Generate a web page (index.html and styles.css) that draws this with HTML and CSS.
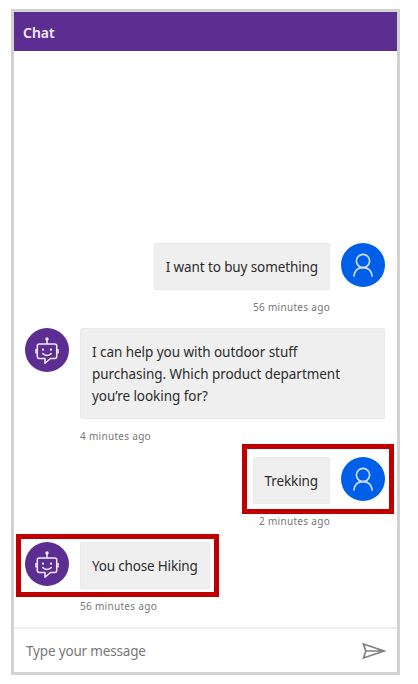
FILE: index.html
```html
<!DOCTYPE html>
<html lang="en">
<head>
<meta charset="utf-8">
<title>Chat</title>
<link rel="stylesheet" href="styles.css">
</head>
<body>
<svg class="defs" width="0" height="0" aria-hidden="true">
  <symbol id="bot" viewBox="0 0 44 44">
    <circle cx="22" cy="11" r="1.7" fill="#f3ecfa"/>
    <g fill="none" stroke="#f3ecfa" stroke-width="1.5" stroke-linejoin="round">
      <path d="M22 12v4M14.300 16h15.400a2 2 0 0 1 2 2v10.500a2 2 0 0 1-2 2h-4.200l-5.500 4.700V30.500h-5.700a2 2 0 0 1-2-2V18a2 2 0 0 1 2-2z"/>
      <path d="M17.700 25.500c2 2.500 6.600 2.500 8.600 0" stroke-linecap="round"/>
      <path d="M11 21v4.500M33 21v4.500" stroke-width="1.500"/>
    </g>
    <circle cx="18" cy="21.700" r="1.100" fill="#f3ecfa"/>
    <circle cx="26" cy="21.700" r="1.100" fill="#f3ecfa"/>
  </symbol>
  <symbol id="person" viewBox="0 0 44 44">
    <g fill="none" stroke="#d0e0ff" stroke-width="1.600">
      <circle cx="22" cy="18" r="6.600"/>
      <path d="M12.700 33.600C13.400 27.600 17 24.600 22 24.600s8.600 3 9.300 9"/>
    </g>
  </symbol>
</svg>
<main class="chat">
  <header class="header">Chat</header>
  <section class="log">
    <div class="message user">
      <div class="row"><p class="bubble">I want to buy something</p><svg class="avatar"><use href="#person"/></svg></div>
      <time class="time">56 minutes ago</time>
    </div>
    <div class="message bot long">
      <div class="row"><svg class="avatar"><use href="#bot"/></svg><p class="bubble">I can help you with outdoor stuff<br>purchasing. Which product department<br>you’re looking for?</p></div>
      <time class="time">4 minutes ago</time>
    </div>
    <div class="message user marked">
      <div class="row"><p class="bubble">Trekking</p><svg class="avatar"><use href="#person"/></svg></div>
      <time class="time">2 minutes ago</time>
    </div>
    <div class="message bot marked">
      <div class="row"><svg class="avatar"><use href="#bot"/></svg><p class="bubble">You chose Hiking</p></div>
      <time class="time">56 minutes ago</time>
    </div>
  </section>
  <footer class="composer">
    <span>Type your message</span>
    <svg class="send" width="24" height="18" viewBox="0 0 24 18"><path d="M1.500 2 22 9 1.500 16 3.800 9zM3.800 9H21" fill="none" stroke="#808080" stroke-width="1.700"/></svg>
  </footer>
</main>
</body>
</html>
```
FILE: styles.css
```css
*, *::after { box-sizing: border-box; }
body {
  margin: 0;
  padding: 9px 0 0 11px;
  background: #fff;
  font: 13.5px/22px "Noto Sans", sans-serif;
  letter-spacing: -0.11px;
  color: #2c2c2c;
}
.defs { position: absolute; }
.chat {
  display: flex;
  flex-direction: column;
  width: 388.500px;
  height: 666px;
  border: 3px solid #d2d2d2;
}
.header {
  height: 39px;
  padding: 0 9px;
  background: #5c2e91;
  color: #f3edf9;
  font-size: 14px;
  font-weight: 600;
  letter-spacing: 0;
  line-height: 42px;
}
.log {
  flex: 1;
  display: flex;
  flex-direction: column;
  padding: 192px 11.500px 0 11px;
}
.message { height: 85px; }
.long { height: 129px; }
.row { display: flex; gap: 11px; align-items: flex-start; }
.user .row { justify-content: flex-end; }
.avatar { width: 44px; height: 44px; flex: none; border-radius: 50%; background: #5c2e91; }
.user .avatar { background: #005fe9; }
.bubble {
  margin: 0;
  min-height: 47px;
  padding: 12px 11px 11px;
  border: 1px solid #e9e9e9;
  border-radius: 2px;
  background: #efefef;
  white-space: nowrap;
}
.bot.marked .bubble { letter-spacing: -0.18px; }
.long .bubble { flex: 1; letter-spacing: -0.05px; }
.time {
  display: block;
  margin: 8px 55px 0;
  color: #777;
  font-size: 10px;
  letter-spacing: 0.3px;
  line-height: 18px;
}
.user .time { text-align: right; }
.marked .row { position: relative; }
.marked .row::after {
  content: "";
  position: absolute;
  border: 5px solid #c00000;
}
.user.marked .row::after { inset: -13px -9px -10px auto; width: 152px; }
.bot.marked .row::after { inset: -8px auto -8px -9px; width: 203px; }
.composer {
  display: flex;
  justify-content: space-between;
  align-items: center;
  height: 45px;
  padding: 0 11px 0 12px;
  border-top: 2px solid #eee;
  color: #777;
  letter-spacing: -0.17px;
}
```
